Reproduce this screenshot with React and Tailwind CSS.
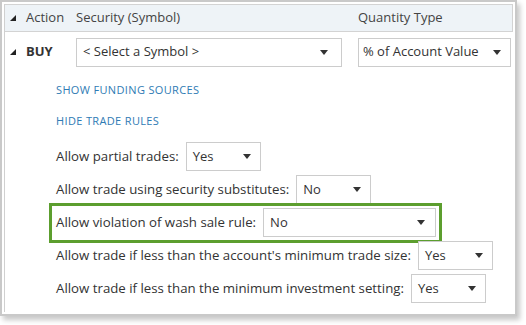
import { useState } from 'react';

const font = { fontFamily: '"Open Sans", "Noto Sans", Arial, sans-serif' };

function Caret({ className = '' }) {
  return (
    <svg width="8" height="5" viewBox="0 0 8 5" className={className}>
      <polygon points="0,0 8,0 4,5" fill="#333" />
    </svg>
  );
}

function Corner() {
  return (
    <svg width="6" height="6" viewBox="0 0 6 6" className="shrink-0">
      <polygon points="6,0 6,6 0,6" fill="#222" />
    </svg>
  );
}

function Select({ value, width, pl = 'pl-[6px]', pr = 'pr-[9px]' }) {
  return (
    <div
      className={`flex h-[29px] shrink-0 items-center justify-between border border-[#cccccc] bg-white ${pl} ${pr} text-[13px] text-[#333]`}
      style={{ width }}
    >
      <span>{value}</span>
      <Caret />
    </div>
  );
}

export default function App() {
  const [rules] = useState([
    { label: 'Allow partial trades:', value: 'Yes', width: 75 },
    { label: 'Allow trade using security substitutes:', value: 'No', width: 75 },
    { label: 'Allow violation of wash sale rule:', value: 'No', width: 173, highlight: true },
    { label: "Allow trade if less than the account's minimum trade size:", value: 'Yes', width: 75 },
    { label: 'Allow trade if less than the minimum investment setting:', value: 'Yes', width: 75 },
  ]);

  return (
    <div className="h-[325px] w-[526px] bg-white" style={font}>
      <div className="h-[316px] w-[517px] border-2 border-[#c9c9c9] bg-white p-[2px] shadow-[3px_4px_5px_rgba(0,0,0,0.22)]">
        <div className="h-full border-l border-[#d0d0d0]">

          {/* Header */}
          <div className="flex h-[28px] items-center border border-l-0 border-[#d3d3d3] bg-[#eef3f7] text-[13px] text-[#444]">
            <div className="flex w-[71px] items-center gap-[10px] pl-[5px]">
              <Corner />
              <span>Action</span>
            </div>
            <div className="w-[282px]">Security (Symbol)</div>
            <div>Quantity Type</div>
          </div>

          {/* Buy row */}
          <div className="mt-[5px] flex h-[30px] items-center text-[13px] text-[#333]">
            <div className="flex w-[71px] items-center gap-[10px] pl-[5px]">
              <Corner />
              <span className="font-bold">BUY</span>
            </div>
            <div className="w-[282px]">
              <Select value="< Select a Symbol >" width={266} pr="pr-[13px]" />
            </div>
            <Select value="% of Account Value" width={153} pl="pl-[4px]" />
          </div>

          {/* Links */}
          <div className="pl-[51px] text-[11px] tracking-[0.35px] text-[#2f7bb4]">
            <div className="mt-[16px] leading-[14px]">SHOW FUNDING SOURCES</div>
            <div className="mt-[17px] leading-[14px]">HIDE TRADE RULES</div>
          </div>

          {/* Trade rules */}
          <div className="mt-[12px] flex flex-col text-[13.25px] text-[#333]">
            {rules.map((r) => (
              <div key={r.label} className="relative flex h-[33px] items-center gap-[7px] pl-[51px]">
                <span className="whitespace-nowrap">{r.label}</span>
                <Select value={r.value} width={r.width} pr={r.highlight ? 'pr-[10px]' : 'pr-[9px]'} />
                {r.highlight && (
                  <div className="pointer-events-none absolute left-[44px] top-[-3px] h-[40px] w-[393px] border-[3px] border-[#5c9e2e]" />
                )}
              </div>
            ))}
          </div>

        </div>
      </div>
    </div>
  );
}
